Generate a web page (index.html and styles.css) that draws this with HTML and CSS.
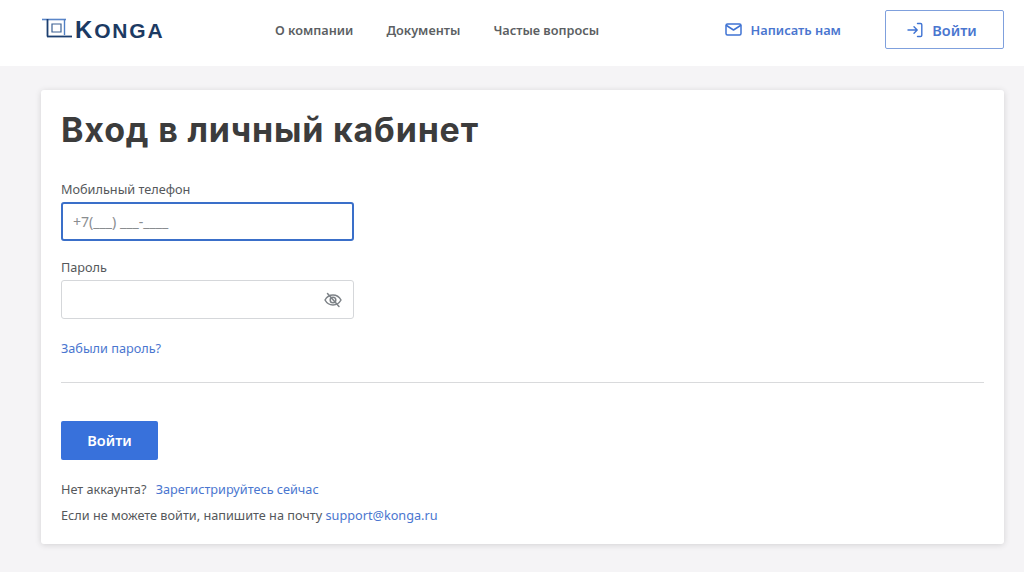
FILE: index.html
```html
<!DOCTYPE html>
<html lang="ru">
<head>
<meta charset="utf-8">
<title>Konga</title>
<link rel="stylesheet" href="styles.css">
</head>
<body>
<header class="header">
  <a class="logo">
    <svg class="logo-mark" width="30" height="23" viewBox="0 0 30 23" fill="none">
      <path d="M0 1.5H24" stroke="#5b86c9" stroke-width="1.6"/>
      <path d="M5.5 1V18.5" stroke="#1c3f70" stroke-width="1.8"/>
      <path d="M5 18.5H30" stroke="#1c3f70" stroke-width="1.8"/>
      <path d="M22.5 1V17" stroke="#4f7fc4" stroke-width="1.4"/>
      <path d="M10 6H19V14H10Z" stroke="#3c6194" stroke-width="1.2"/>
    </svg>
    <span class="logo-text"><span class="logo-cap">K</span>ONGA</span>
  </a>
  <nav class="nav">
    <a>О компании</a>
    <a>Документы</a>
    <a>Частые вопросы</a>
  </nav>
  <a class="write">
    <svg width="17" height="13" viewBox="0 0 17 13" fill="none" stroke="#3f73d3" stroke-width="1.5" stroke-linejoin="round" stroke-linecap="round">
      <rect x="1" y="1" width="15" height="11" rx="1.5"/>
      <path d="M1.5 2.5L8.5 7L15.5 2.5"/>
    </svg>
    Написать нам
  </a>
  <a class="login">
    <svg width="16" height="16" viewBox="0 0 16 16" fill="none" stroke="#3f73d3" stroke-width="1.4" stroke-linecap="round" stroke-linejoin="round">
      <path d="M1 8H10M7 4.8L10.2 8L7 11.2"/>
      <path d="M10.5 1.5H13.5C14.3 1.5 14.8 2 14.8 2.8V13.2C14.8 14 14.3 14.5 13.5 14.5H10.5"/>
    </svg>
    Войти
  </a>
</header>
<main class="main">
  <section class="card">
    <h1 class="title">Вход в личный кабинет</h1>
    <div class="field field-phone">
      <label class="label">Мобильный телефон</label>
      <div class="input input-focus"><span class="placeholder">+7(___) ___-____</span></div>
    </div>
    <div class="field field-pass">
      <label class="label">Пароль</label>
      <div class="input input-pass">
        <svg width="18" height="16" viewBox="0 0 18 16" fill="none" stroke="#7d8287" stroke-width="1.5" stroke-linecap="round" stroke-linejoin="round">
          <path d="M1 8C2.8 4.8 5.6 3 9 3C12.4 3 15.2 4.8 17 8C15.2 11.2 12.4 13 9 13C5.6 13 2.8 11.2 1 8Z"/>
          <circle cx="9" cy="8" r="2.8"/>
          <path d="M3.5 1.5L15 14.5"/>
        </svg>
      </div>
    </div>
    <a class="link forgot">Забыли пароль?</a>
    <hr class="divider">
    <button class="submit">Войти</button>
    <p class="note note-first">Нет аккаунта? <a class="link reg">Зарегистрируйтесь сейчас</a></p>
    <p class="note">Если не можете войти, напишите на почту <a class="link">support@konga.ru</a></p>
  </section>
</main>
</body>
</html>
```
FILE: styles.css
```css
* { box-sizing: border-box; }
html, body { margin: 0; height: 100%; }
body {
  background: #f5f4f6;
  font-family: "Noto Sans", sans-serif;
  color: #4a4a4a;
  overflow: hidden;
}
.header {
  height: 66px;
  background: #fff;
  display: flex;
  align-items: center;
  padding: 0 20px 7px 42px;
}
.logo { display: flex; align-items: center; gap: 3px; width: 233px; }
.logo-text {
  font-family: "Liberation Sans", sans-serif;
  font-size: 21px;
  letter-spacing: 1.8px;
  color: #1c3a63;
  font-weight: 700;
}
.logo-cap { font-size: 24px; }
.nav { display: flex; gap: 33px; font-size: 12.7px; font-weight: 600; color: #5c5f63; }
.write {
  margin-left: auto;
  display: flex;
  align-items: center;
  gap: 9px;
  font-size: 12.8px;
  font-weight: 600;
  color: #4a76cf;
}
.login {
  margin-left: 44px;
  width: 119px;
  height: 39px;
  padding-right: 5px;
  border: 1px solid #7fa0dd;
  border-radius: 2px;
  display: flex;
  align-items: center;
  justify-content: center;
  gap: 9px;
  font-size: 14.5px;
  font-weight: 600;
  color: #4a76cf;
}
.main { padding: 24px 20px 0 41px; }
.card {
  background: #fff;
  height: 454px;
  border-radius: 3px;
  box-shadow: 0 1px 6px rgba(0,0,0,.14);
  padding: 17px 20px 0;
}
.title {
  margin: 0;
  font-family: "Inter", sans-serif;
  font-size: 34px;
  letter-spacing: .8px;
  line-height: 46px;
  font-weight: 700;
  color: #3c3c3c;
}
.field { width: 293px; }
.field-phone { margin-top: 27px; }
.field-pass { margin-top: 17px; }
.label { display: block; font-size: 12.7px; line-height: 18px; margin-bottom: 4px; color: #55585b; }
.input {
  height: 39px;
  border: 1px solid #d5d7da;
  border-radius: 3px;
  display: flex;
  align-items: center;
  padding: 0 10px;
}
.input-focus { border: 2px solid #3a6fc9; }
.input-pass { justify-content: flex-end; padding-right: 11px; }
.placeholder { font-size: 14.1px; color: #8a8d90; }
.link { color: #4a76cf; }
.forgot { display: block; margin-top: 20px; font-size: 12.7px; line-height: 18px; }
.divider { margin: 25px 0 0; border: 0; border-top: 1px solid #d9dadc; }
.submit {
  display: block;
  margin-top: 38px;
  width: 97px;
  height: 39px;
  padding: 0 0 2px;
  border: 0;
  border-radius: 2px;
  background: #3871db;
  color: #fff;
  font: 600 14.5px "Noto Sans", sans-serif;
}
.note { margin: 8px 0 0; font-size: 12.7px; line-height: 18px; color: #55585b; }
.note-first { margin-top: 20px; }
.reg { margin-left: 6px; }
```
